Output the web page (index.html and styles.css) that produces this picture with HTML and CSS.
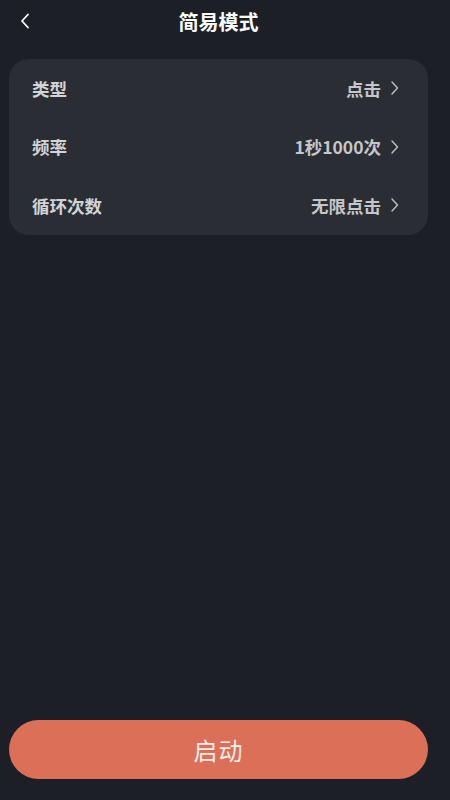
FILE: index.html
```html
<!DOCTYPE html>
<html lang="zh-CN">
<head>
    <meta charset="UTF-8">
    <meta name="viewport" content="width=device-width, initial-scale=1.0">
    <title>简易模式</title>
    <link rel="stylesheet" href="styles.css">
</head>
<body>
    <div class="page">
        <!-- Top bar -->
        <header class="top-bar">
            <span class="back">
                <svg width="14" height="18" viewBox="0 0 14 18"><path d="M10 2.5 L4 9 L10 15.5" fill="none" stroke="#fff" stroke-width="1.8" stroke-linecap="round" stroke-linejoin="round"/></svg>
            </span>
            <h1>简易模式</h1>
        </header>

        <!-- Settings card -->
        <div class="card">
            <div class="row">
                <span class="label">类型</span>
                <span class="value">点击
                    <svg class="arrow" width="10" height="16" viewBox="0 0 10 16"><path d="M2 2 L7.5 8 L2 14" fill="none" stroke="#bfc0c4" stroke-width="1.4" stroke-linecap="round" stroke-linejoin="round"/></svg>
                </span>
            </div>
            <div class="row">
                <span class="label">频率</span>
                <span class="value">1秒1000次
                    <svg class="arrow" width="10" height="16" viewBox="0 0 10 16"><path d="M2 2 L7.5 8 L2 14" fill="none" stroke="#bfc0c4" stroke-width="1.4" stroke-linecap="round" stroke-linejoin="round"/></svg>
                </span>
            </div>
            <div class="row">
                <span class="label">循环次数</span>
                <span class="value">无限点击
                    <svg class="arrow" width="10" height="16" viewBox="0 0 10 16"><path d="M2 2 L7.5 8 L2 14" fill="none" stroke="#bfc0c4" stroke-width="1.4" stroke-linecap="round" stroke-linejoin="round"/></svg>
                </span>
            </div>
        </div>

        <div class="spacer"></div>

        <button class="start-btn">启动</button>
    </div>
</body>
</html>
```

FILE: styles.css
```css
body {
    margin: 0;
    padding: 0;
    background-color: #1d1f26;
    font-family: "Noto Sans CJK SC", "Noto Sans", sans-serif;
    color: #fff;
}

.page {
    height: 800px;
    display: flex;
    flex-direction: column;
    padding: 0 22px 0 9px;
    box-sizing: border-box;
}

.top-bar {
    position: relative;
    height: 42px;
    display: flex;
    align-items: center;
    justify-content: center;
}
.top-bar h1 {
    margin: 0;
    font-size: 20px;
    font-weight: 700;
    color: #fff;
}
.back {
    position: absolute;
    left: 9px;
    top: 11px;
}

.card {
    margin-top: 17px;
    background-color: #2b2d35;
    border-radius: 20px;
}
.row {
    height: 58.5px;
    display: flex;
    align-items: center;
    justify-content: space-between;
    padding: 0 28px 0 23px;
}
.label {
    font-size: 17.5px;
    font-weight: 700;
    color: #d2d3d6;
}
.value {
    display: flex;
    align-items: center;
    gap: 9px;
    font-size: 17.5px;
    font-weight: 700;
    color: #c5c6c9;
}

.spacer {
    flex: 1;
}

.start-btn {
    height: 59px;
    margin-bottom: 21px;
    border: none;
    border-radius: 30px;
    background-color: #dc6f58;
    color: #f5ece8;
    font-family: "Noto Sans CJK SC", sans-serif;
    font-size: 24px;
    font-weight: 400;
    letter-spacing: 1px;
}
```
